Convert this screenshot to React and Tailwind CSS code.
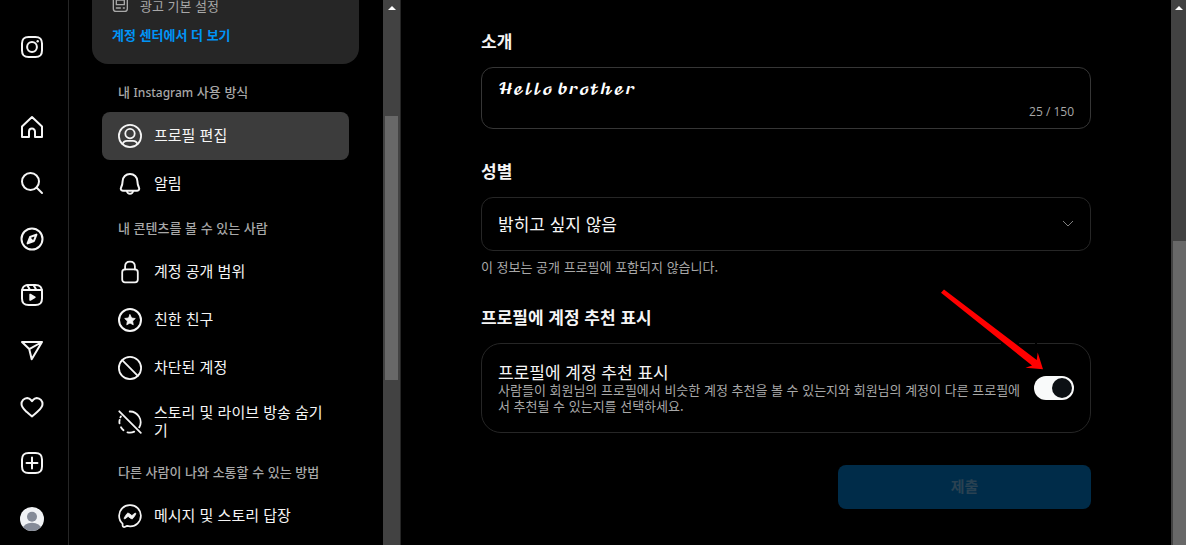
const OUTLINE =
  'M2 12v3.45c0 2.849.698 4.005 1.606 4.944.94.909 2.098 1.608 4.946 1.608h6.896c2.848 0 4.006-.7 4.946-1.608C21.302 19.455 22 18.3 22 15.45V8.552c0-2.849-.698-4.006-1.606-4.945C19.454 2.7 18.296 2 15.448 2H8.552c-2.848 0-4.006.699-4.946 1.607C2.698 4.547 2 5.703 2 8.552Z';

function Icon({ children, className = 'size-6', width = 2 }) {
  return (
    <svg
      viewBox="0 0 24 24"
      className={`${className} shrink-0`}
      fill="none"
      stroke="currentColor"
      strokeWidth={width}
      strokeLinecap="round"
      strokeLinejoin="round"
      aria-hidden="true"
    >
      {children}
    </svg>
  );
}

const LogoIcon = () => (
  <Icon>
    <path d={OUTLINE} />
    <circle cx="12" cy="12" r="4.9" />
    <circle cx="17.7" cy="6.2" r="1.2" fill="currentColor" stroke="none" />
  </Icon>
);

const HomeIcon = () => (
  <Icon>
    <path d="M9.005 16.545a2.997 2.997 0 0 1 2.997-2.997A2.997 2.997 0 0 1 15 16.545V22h7V11.543L12 2 2 11.543V22h7.005Z" />
  </Icon>
);

const SearchIcon = () => (
  <Icon>
    <circle cx="10.5" cy="10.5" r="8.5" />
    <path d="M16.511 16.511 22 22" />
  </Icon>
);

const ExploreIcon = () => (
  <Icon>
    <path d="M13.941 13.953 7.581 16.424 10.06 10.056 16.42 7.585Z" />
    <path d="M10.06 10.056 13.949 13.945 7.581 16.424Z" fill="currentColor" stroke="none" />
    <circle cx="12" cy="12" r="10.5" />
  </Icon>
);

const ReelsIcon = () => (
  <Icon>
    <path d="M2.049 7.002H21.95M13.504 2.001l2.858 5.001M7.207 2.11l2.795 4.892" />
    <path d={OUTLINE} />
    <path
      d="M9.763 17.664a.908.908 0 0 1-.454-.787V11.63a.909.909 0 0 1 1.364-.788l4.545 2.624a.909.909 0 0 1 0 1.575l-4.545 2.624a.91.91 0 0 1-.91 0Z"
      fill="currentColor"
      stroke="none"
    />
  </Icon>
);

const SendIcon = () => (
  <Icon>
    <path d="M22 3 9.218 10.083M11.698 20.334 22 3.001H2l7.218 7.083Z" />
  </Icon>
);

const HeartIcon = () => (
  <Icon>
    <path d="M16.792 2.904A5.989 5.989 0 0 1 22.5 9.122c0 3.572-2.852 5.659-5.397 7.922-2.512 2.243-4.665 4.069-5.103 4.352-.477-.309-2.943-2.423-5.103-4.352C4.341 14.772 1.5 12.667 1.5 9.122a5.989 5.989 0 0 1 5.708-6.218 5.21 5.21 0 0 1 3.675 1.941c.74.975.98 1.463 1.12 1.463s.378-.488 1.11-1.466a5.17 5.17 0 0 1 3.679-1.938Z" />
  </Icon>
);

const CreateIcon = () => (
  <Icon>
    <path d={OUTLINE} />
    <path d="M6.545 12.001h10.91M12.003 6.545v10.91" />
  </Icon>
);

const Avatar = () => (
  <svg viewBox="0 0 24 24" className="size-6 shrink-0" aria-hidden="true">
    <defs>
      <clipPath id="avatar-clip">
        <circle cx="12" cy="12" r="12" />
      </clipPath>
    </defs>
    <g clipPath="url(#avatar-clip)">
      <rect width="24" height="24" fill="#f0f2f5" />
      <circle cx="12" cy="9.8" r="5" fill="#858b98" />
      <ellipse cx="12" cy="22" rx="9.2" ry="6.2" fill="#858b98" />
    </g>
  </svg>
);

const ProfileIcon = () => (
  <Icon width={1.8}>
    <circle cx="12" cy="12" r="11.1" />
    <circle cx="12" cy="9.6" r="4.7" />
    <path d="M4.6 20.2c.6-2.4 2.4-3.4 4.4-3.4h6c2 0 3.8 1 4.4 3.4" />
  </Icon>
);

const BellIcon = () => (
  <Icon>
    <path d="M12 1.9c-4.2 0-7.2 3.2-7.4 7.3-.1 3-.6 4.5-1.5 6.3-.9 1.8.1 3.2 1.7 3.2h14.4c1.6 0 2.6-1.4 1.7-3.2-.9-1.8-1.4-3.3-1.5-6.3C19.2 5.1 16.2 1.9 12 1.9Z" />
    <path d="M9 19.4c.3 1.4 1.5 2.3 3 2.3s2.7-.9 3-2.3" />
  </Icon>
);

const LockIcon = () => (
  <Icon width={1.8}>
    <path d="M7.1 9.4V6.6C7.1 3.5 9.2 1.7 12 1.7s4.9 1.8 4.9 4.9v2.8" />
    <rect x="4.2" y="9.4" width="15.6" height="13" rx="2.8" />
  </Icon>
);

const StarIcon = () => (
  <Icon>
    <circle cx="12" cy="12" r="11" />
    <path
      d="m12 6.7 1.6 3.3 3.7.5-2.7 2.6.65 3.65L12 15l-3.25 1.75.65-3.65-2.7-2.6 3.7-.5Z"
      fill="currentColor"
      strokeWidth="0.8"
    />
  </Icon>
);

const BlockedIcon = () => (
  <Icon width={1.8}>
    <circle cx="12" cy="12" r="11.1" />
    <path d="m4.2 4.2 15.6 15.6" />
  </Icon>
);

const HideStoryIcon = () => (
  <Icon width={1.8}>
    <path d="M1.3 1.3 22.8 22.8" />
    <path d="M11.7 1.5A10.7 10.7 0 0 1 21.3 17.3" />
    <path d="M1.7 9.8c-.4 1.5-.4 2.5-.2 3.6M3 17.3c.7 1.3 1.5 2.2 2.5 3M9.5 22.3c2.3.5 4.7.3 6.7-.7M2.4 7.4l.5-1" />
  </Icon>
);

const MessengerIcon = () => (
  <Icon width={1.739}>
    <path d="M12.003 1.131a10.487 10.487 0 0 1 10.87 10.57 10.487 10.487 0 0 1-10.87 10.57 11.77 11.77 0 0 1-2.92-.37l-2.5 1.03c-.9.3-1.9-.2-1.95-1.3l-.06-2.05a10.35 10.35 0 0 1-3.44-7.88 10.487 10.487 0 0 1 10.87-10.57Z" />
    <path
      d="M17.79 10.132a.659.659 0 0 0-.962-.873l-2.556 2.05a.63.63 0 0 1-.758.002L11.06 9.47a1.576 1.576 0 0 0-2.277.42l-2.567 3.98a.659.659 0 0 0 .961.875l2.556-2.049a.63.63 0 0 1 .759-.002l2.452 1.84a1.576 1.576 0 0 0 2.278-.42Z"
      fill="currentColor"
      strokeWidth="0.8"
    />
  </Icon>
);

const AdsIcon = () => (
  <Icon className="size-4" width={2}>
    <rect x="2" y="1" width="21" height="22" rx="4" />
    <rect x="6.5" y="6" width="12" height="7" />
    <path d="M6.5 18h6M17 18h1.5" />
  </Icon>
);

const RAIL = [
  { label: '홈', icon: HomeIcon },
  { label: '검색', icon: SearchIcon },
  { label: '탐색 탭', icon: ExploreIcon },
  { label: '릴스', icon: ReelsIcon },
  { label: '메시지', icon: SendIcon },
  { label: '알림', icon: HeartIcon },
  { label: '만들기', icon: CreateIcon },
  { label: '프로필', icon: Avatar },
];

const SECTIONS = [
  {
    id: 'usage',
    title: (
      <>
        내 <span className="font-['Noto_Sans'] text-xs">Instagram</span> 사용 방식
      </>
    ),
    items: [
      { label: '프로필 편집', icon: ProfileIcon, active: true },
      { label: '알림', icon: BellIcon },
    ],
  },
  {
    id: 'audience',
    title: '내 콘텐츠를 볼 수 있는 사람',
    items: [
      { label: '계정 공개 범위', icon: LockIcon },
      { label: '친한 친구', icon: StarIcon },
      { label: '차단된 계정', icon: BlockedIcon },
      { label: '스토리 및 라이브 방송 숨기기', icon: HideStoryIcon },
    ],
  },
  {
    id: 'interactions',
    title: '다른 사람이 나와 소통할 수 있는 방법',
    items: [{ label: '메시지 및 스토리 답장', icon: MessengerIcon }],
  },
];

function NavRail() {
  return (
    <nav className="flex w-[69px] shrink-0 flex-col border-r border-[#262626] pt-[35px] pl-5">
      <a href="#" aria-label="Instagram" className="mb-14 w-6">
        <LogoIcon />
      </a>
      <ul className="flex flex-col gap-8">
        {RAIL.map(({ label, icon: Glyph }) => (
          <li key={label}>
            <a href="#" aria-label={label} className="block w-6">
              <Glyph />
            </a>
          </li>
        ))}
      </ul>
    </nav>
  );
}

function ScrollTrack({ className, children }) {
  return (
    <div aria-hidden="true" className={`flex shrink-0 flex-col bg-[#424242] pt-[6px] ${className}`}>
      <svg viewBox="0 0 8 4" className="h-1 w-2 shrink-0 self-center fill-white">
        <path d="M4 0 8 4H0Z" />
      </svg>
      {children}
    </div>
  );
}

function SettingsNav() {
  return (
    <aside className="flex w-[314px] shrink-0 flex-col overflow-hidden">
      <div className="mr-6 ml-[23px] -mt-5 flex shrink-0 flex-col gap-[9px] rounded-2xl bg-[#262626] px-5 pt-4 pb-[19px] text-[13px] leading-5">
        <div className="flex gap-3 text-[#a8a8a8]">
          <AdsIcon />
          <span>광고 기본 설정</span>
        </div>
        <a href="#" className="font-semibold text-[#0095f6]">
          계정 센터에서 더 보기
        </a>
      </div>
      <div className="mt-2 mr-[34px] ml-[33px]">
        {SECTIONS.map((section) => (
          <section key={section.id}>
            <h2 className="h-10 px-4 text-[13px] leading-10 font-medium whitespace-nowrap text-[#a8a8a8]">
              {section.title}
            </h2>
            <ul>
              {section.items.map(({ label, icon: Glyph, active }) => (
                <li key={label}>
                  <a
                    href="#"
                    aria-current={active ? 'page' : undefined}
                    className={`flex min-h-12 items-center gap-3 rounded-lg py-[11px] pr-5 pl-4 text-[15px] leading-[18px] ${active ? 'bg-[#3c3c3c]' : ''}`}
                  >
                    <Glyph />
                    <span className="pb-[2px]">{label}</span>
                  </a>
                </li>
              ))}
            </ul>
          </section>
        ))}
      </div>
    </aside>
  );
}

function PointerArrow() {
  return (
    <svg
      viewBox="0 0 110 90"
      className="pointer-events-none absolute bottom-full left-[-100px] h-[90px] w-[110px] max-w-none"
      aria-hidden="true"
    >
      <path d="M67 57h18v1.5H67ZM101 57h2v1.5h-2Z" fill="#000" />
      <path d="M10 3.5 102.7 74 103.7 66.5 109 83.3 91.5 81.7 98 79.5 7 6.7Z" fill="#f00" />
    </svg>
  );
}

function ProfileForm() {
  return (
    <form className="flex flex-col gap-[30px]" onSubmit={(e) => e.preventDefault()}>
      <div className="flex flex-col gap-[14px]">
        <label htmlFor="bio" className="text-[17px] leading-6 font-bold">
          소개
        </label>
        <div className="flex flex-col gap-[2px] rounded-xl border border-[#363636] px-4 pt-[10px] pb-2">
          <textarea
            id="bio"
            rows={1}
            className="h-6 w-full resize-none overflow-hidden bg-transparent font-['DejaVu_Math_TeX_Gyre','DejaVu_Serif',serif] text-sm leading-6 text-white outline-none"
            defaultValue="𝓗𝓮𝓵𝓵𝓸 𝓫𝓻𝓸𝓽𝓱𝓮𝓻"
          />
          <span className="self-end font-['Open_Sans'] text-xs leading-4 text-[#a8a8a8]">25 / 150</span>
        </div>
      </div>

      <div className="flex flex-col">
        <label htmlFor="gender" className="mb-[14px] text-[17px] leading-6 font-bold">
          성별
        </label>
        <div className="relative flex">
          <select
            id="gender"
            className="h-[54px] w-full appearance-none rounded-xl border border-[#262626] bg-black px-4 text-[17px] outline-none"
          >
            <option>밝히고 싶지 않음</option>
          </select>
          <svg
            viewBox="0 0 12 12"
            className="pointer-events-none absolute top-5 right-[17px] size-3"
            fill="none"
            stroke="#808080"
            aria-hidden="true"
          >
            <path d="m1 4 5 5 5-5" />
          </svg>
        </div>
        <p className="mt-2 text-[13px] leading-4 text-[#a8a8a8]">이 정보는 공개 프로필에 포함되지 않습니다.</p>
      </div>

      <div className="flex flex-col gap-[14px]">
        <h2 className="text-[17px] leading-6 font-bold">프로필에 계정 추천 표시</h2>
        <div className="flex items-center justify-between gap-3 rounded-[20px] border border-[#262626] px-4 py-[17px]">
          <div>
            <label htmlFor="suggest" className="block text-[17px] leading-[21px]">
              프로필에 계정 추천 표시
            </label>
            <p className="pb-px text-[13px] leading-4 text-[#a8a8a8]">
              사람들이 회원님의 프로필에서 비슷한 계정 추천을 볼 수 있는지와 회원님의 계정이 다른 프로필에서 추천될 수
              있는지를 선택하세요.
            </p>
          </div>
          <div className="relative flex shrink-0">
            <input
              id="suggest"
              type="checkbox"
              role="switch"
              defaultChecked
              className="flex h-6 w-10 appearance-none items-center rounded-full bg-[#737373] p-[2px] before:size-5 before:rounded-full before:bg-[#0c1014] checked:justify-end checked:bg-[#f9fafa]"
            />
            <PointerArrow />
          </div>
        </div>
      </div>

      <button
        type="submit"
        disabled
        className="mt-[2px] h-11 w-[253px] self-end rounded-lg bg-[#002c49] pb-[2px] text-[15px] font-bold text-[#2a4252]"
      >
        제출
      </button>
    </form>
  );
}

export default function App() {
  return (
    <div
      lang="ko"
      className="flex h-screen overflow-hidden bg-black font-['Noto_Sans_CJK_KR','Noto_Sans',sans-serif] text-[#f5f5f5]"
    >
      <NavRail />
      <SettingsNav />
      <ScrollTrack className="w-[17px]">
        <div className="mx-[2px] mt-[106px] h-[264px] bg-[#686868]" />
      </ScrollTrack>
      <main className="min-w-0 flex-1 overflow-hidden border-l border-[#262626] px-20 pt-[29px]">
        <ProfileForm />
      </main>
      <ScrollTrack className="w-[15px]">
        <div className="mt-[231px] ml-[2px] flex-1 bg-[#686868]" />
      </ScrollTrack>
    </div>
  );
}
